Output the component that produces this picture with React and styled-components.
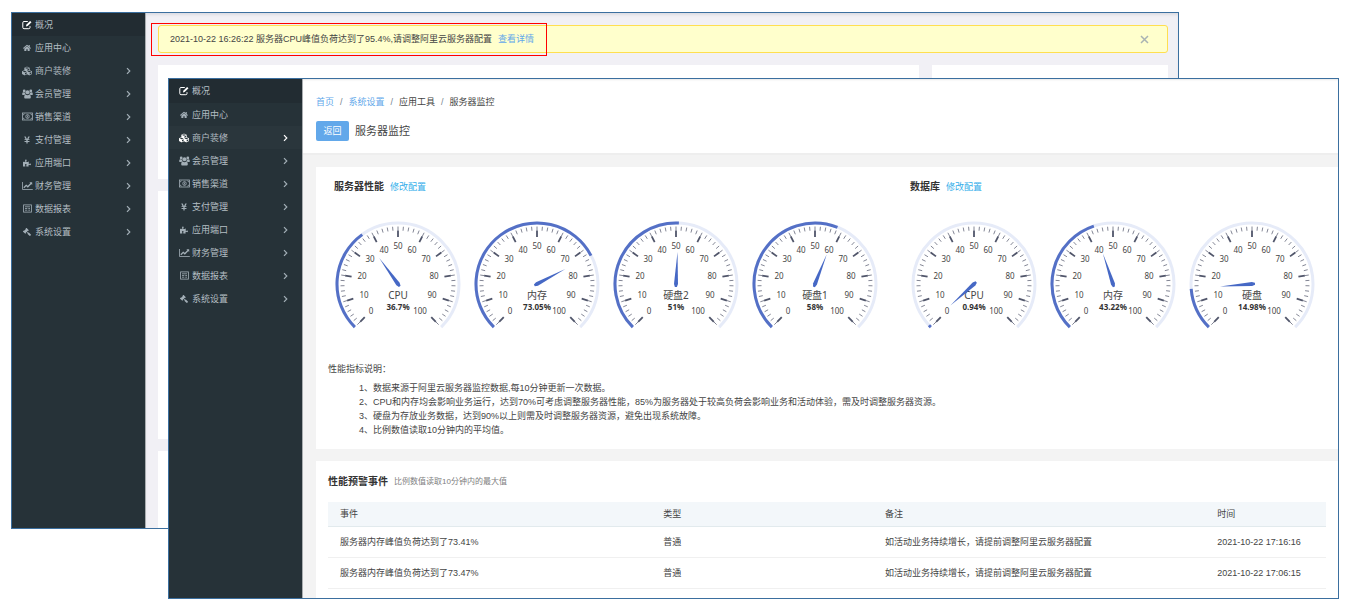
import React from "react";
import styled, { createGlobalStyle } from "styled-components";
import {
  FaHome,
  FaCubes,
  FaYenSign,
  FaPuzzlePiece,
  FaGavel,
} from "react-icons/fa";

const GlobalStyle = createGlobalStyle`
  * {
    box-sizing: border-box;
  }
  body {
    margin: 0;
    background: #ffffff;
    color: #444444;
    font-family: "Liberation Sans", "Noto Sans CJK SC", sans-serif;
    font-size: 9px;
    line-height: 14px;
  }
  a {
    text-decoration: none;
  }
`;

const Desktop = styled.div`
  position: relative;
  min-height: 100vh;
  overflow: hidden;
`;

const Window = styled.section`
  position: absolute;
  display: flex;
  overflow: hidden;
  border: 1px solid #3b6f9f;
`;
const BackWindow = styled(Window)`
  top: 12px;
  bottom: 83px;
  left: 11px;
  right: 174px;
  background: #f1f0f5;
`;
const FrontWindow = styled(Window)`
  top: 78px;
  bottom: 13px;
  left: 168px;
  right: 14px;
  background: #f3f3f3;
`;

/* sidebar */
const Side = styled.nav`
  flex: none;
  width: 134px;
  border-right: 1px solid #a9adb0;
  background: #263238;
`;
const Menu = styled.ul`
  margin: 0;
  padding: 0;
  list-style: none;
`;
const MenuLink = styled.a`
  display: flex;
  align-items: center;
  gap: 2px;
  height: ${({ $tall }) => ($tall ? "24px" : "23px")};
  padding: 0 13px 0 9px;
  background: ${({ $active, $hover }) =>
    $active ? "#222c32" : $hover ? "#2a363c" : "transparent"};
  color: ${({ $active, $hover }) => ($active || $hover ? "#ffffff" : "#a3afb7")};
`;
const MenuIcon = styled.span`
  display: flex;
  justify-content: center;
  width: 12px;
  font-size: ${({ $small }) => ($small ? "8px" : "10px")};
`;
const MenuText = styled.span`
  flex: 1;
  color: #b4bec3;
`;

const EditIcon = () => (
  <svg width="10" height="10" viewBox="0 0 10 10" fill="none" stroke="currentColor">
    <path d="M5.8 1.5H2a1.2 1.2 0 0 0-1.2 1.2v4.8A1.2 1.2 0 0 0 2 8.7h4.8A1.2 1.2 0 0 0 8 7.5V6.2" />
    <path d="M4 6.5l.3-1.8L8.1.9l1.4 1.4-3.8 3.8z" fill="currentColor" stroke="none" />
  </svg>
);
const GroupIcon = () => (
  <svg width="11" height="10" viewBox="0 0 11 10" fill="currentColor">
    <circle cx="2.2" cy="1.9" r="1.4" />
    <circle cx="8.8" cy="1.9" r="1.4" />
    <circle cx="5.5" cy="3.3" r="2" />
    <path d="M.2 5.2c0-1.4.5-2 1.2-2 .5.4 1 .5 1.7.4 0 .8.2 1.3.6 1.8-.7 0-1.2.2-1.6.7H1C.5 6.100.2 5.800.2 5.200z" />
    <path d="M10.800 5.200c0-1.400-.5-2-1.200-2-.5.400-1 .5-1.700.400 0 .8-.2 1.300-.6 1.800.7 0 1.200.2 1.600.7H10c.5 0 .8-.3.8-.9z" />
    <path d="M2.200 8.200c0-1.600.6-2.600 1.700-2.600 1 .7 2.200.7 3.200 0 1.100 0 1.700 1 1.700 2.600 0 .8-.5 1.300-1.200 1.300H3.400c-.7 0-1.200-.5-1.200-1.300z" />
  </svg>
);
const MoneyIcon = () => (
  <svg width="11" height="9" viewBox="0 0 11 9" fill="none" stroke="currentColor" strokeWidth="0.8">
    <rect x="0.500" y="1" width="10" height="7" />
    <ellipse cx="5.500" cy="4.500" rx="1.700" ry="2" />
    <path d="M5.500 3.400v2.200M1 2.900c.8 0 1.300-.5 1.300-1.300M10 2.900c-.8 0-1.300-.5-1.300-1.300M1 6.100c.8 0 1.300.5 1.300 1.300M10 6.100c-.8 0-1.300.5-1.300 1.300" />
  </svg>
);
const ChartIcon = () => (
  <svg width="11" height="10" viewBox="0 0 11 10" fill="none" stroke="currentColor">
    <path d="M.5 1v7.500H10.800" strokeWidth="0.800" />
    <path d="M1.800 6.800l2.400-2.500 1.600 1.500 3.400-3.500" strokeWidth="1.300" />
    <path d="M7.400 1.300h2.800v2.800z" fill="currentColor" stroke="none" />
  </svg>
);
const ReportIcon = () => (
  <svg width="9" height="9" viewBox="0 0 9 9" fill="none" stroke="currentColor" strokeWidth="0.8">
    <rect x="0.600" y="0.900" width="7.800" height="7.200" />
    <path d="M2 2.800h5M2 4.500h2.300M5.300 4.500h1.700M2 6.200h2.300M5.300 6.200h1.700" />
  </svg>
);
const GavelIcon = styled(FaGavel)`
  transform: scaleX(-1);
`;
const Chevron = () => (
  <svg width="7" height="8" viewBox="0 0 7 8" fill="none" stroke="currentColor" strokeWidth="1.2">
    <path d="M2 1.200L4.800 4L2 6.800" />
  </svg>
);

const menu = [
  { text: "概况", icon: EditIcon },
  { text: "应用中心", icon: FaHome, small: true },
  { text: "商户装修", icon: FaCubes, sub: true },
  { text: "会员管理", icon: GroupIcon, sub: true },
  { text: "销售渠道", icon: MoneyIcon, sub: true },
  { text: "支付管理", icon: FaYenSign, small: true, sub: true },
  { text: "应用端口", icon: FaPuzzlePiece, small: true, sub: true },
  { text: "财务管理", icon: ChartIcon, sub: true },
  { text: "数据报表", icon: ReportIcon, sub: true },
  { text: "系统设置", icon: GavelIcon, small: true, sub: true },
];

const Sidebar = ({ hovered, tallFirst }) => (
  <Side>
    <Menu>
      {menu.map(({ text, icon: Icon, small, sub }, index) => (
        <li key={text}>
          <MenuLink
            href="#"
            $active={index === 0}
            $hover={index === hovered}
            $tall={tallFirst && index === 0}
          >
            <MenuIcon $small={small}>
              <Icon />
            </MenuIcon>
            <MenuText>{text}</MenuText>
            {sub && <Chevron />}
          </MenuLink>
        </li>
      ))}
    </Menu>
  </Side>
);

/* overview page */
const Overview = styled.main`
  flex: 1;
  display: flex;
  flex-direction: column;
  gap: 12px;
  padding: 12px 10px 0 12px;
  box-shadow: inset 0 3px 3px -1px #dcdce2;
`;
const Alert = styled.div`
  position: relative;
  display: flex;
  align-items: center;
  gap: 6px;
  height: 28px;
  padding: 0 18px 0 11px;
  border: 1px solid #ffdf50;
  border-radius: 3px;
  background: #ffffcc;
`;
const AlertMark = styled.div`
  position: absolute;
  top: -3px;
  left: -8px;
  width: 396px;
  height: 33px;
  border: 1px solid #ff0000;
`;
const Link = styled.a`
  color: ${({ $bright }) => ($bright ? "#34aeea" : "#62a8ea")};
`;
const Close = styled.button`
  display: flex;
  margin-left: auto;
  padding: 0;
  border: 0;
  background: none;
  color: #a9b3b3;
`;
const Tiles = styled.div`
  flex: 1;
  display: grid;
  grid-template-columns: 1fr 236px;
  grid-template-rows: 114px 248px 1fr;
  gap: 12px 13px;
`;
const Tile = styled.div`
  background: #ffffff;
`;

/* monitor page */
const Monitor = styled.main`
  flex: 1;
  min-width: 0;
`;
const PageHeader = styled.header`
  padding: 16px 13px 12px;
  border-bottom: 2px solid #eeeeee;
  background: #ffffff;
  box-shadow: inset 0 2px 2px -1px #e8e8e8;
`;
const Crumbs = styled.nav`
  display: flex;
  gap: 6px;
`;
const Slash = styled.span`
  color: #76838f;
`;
const TitleRow = styled.div`
  display: flex;
  align-items: center;
  gap: 6px;
  margin-top: 12px;
`;
const BackButton = styled.button`
  width: 33px;
  height: 20px;
  padding: 0;
  border: 0;
  border-radius: 2px;
  background: #62a8ea;
  color: #ffffff;
  font: inherit;
`;
const PageTitle = styled.h1`
  margin: 0;
  font-size: 11px;
  font-weight: 400;
`;
const Card = styled.section`
  margin: 12px 0 0 13px;
  padding: ${({ $pad }) => $pad};
  background: #ffffff;
`;
const Groups = styled.div`
  display: flex;
  gap: 20px;
`;
const Head = styled.div`
  display: flex;
  align-items: center;
  gap: 6px;
  padding: ${({ $indent }) => ($indent ? "0 6px" : "0")};
`;
const HeadTitle = styled.h2`
  margin: 0;
  color: #333333;
  font-size: 10px;
  font-weight: 700;
`;
const HeadNote = styled.span`
  color: #808080;
  font-size: 8px;
`;
const Gauges = styled.div`
  display: flex;
  margin-top: 20px;
`;
const Dial = styled.svg`
  display: block;
  width: 139px;
  height: 140px;
  font-family: "Noto Sans", "Noto Sans CJK SC", sans-serif;
  text-anchor: middle;
`;
const Notes = styled.div`
  margin-top: 8px;
`;
const NoteList = styled.ul`
  margin: 5px 0 0;
  padding: 0 0 0 31px;
  list-style: none;
`;

const Table = styled.table`
  width: 100%;
  margin-top: 13px;
  border-collapse: collapse;
  table-layout: fixed;
`;
const Th = styled.th`
  width: ${({ $width }) => $width};
  height: 24px;
  padding: 0 12px;
  border-bottom: 1px solid #e2eaed;
  background: #f3f7fa;
  font-weight: 400;
  text-align: left;
`;
const Td = styled.td`
  height: 31px;
  padding: 0 12px;
  border-bottom: 1px solid #f0f0f0;
  white-space: nowrap;
`;

const CX = 70;
const CY = 70;

// 0 sits at the lower left, 100 at the lower right, 270 degrees apart
const point = (value, radius) => {
  const angle = ((225 - value * 2.7) * Math.PI) / 180;
  return [CX + radius * Math.cos(angle), CY - radius * Math.sin(angle)];
};

const arc = (value) => {
  const large = value * 2.7 > 180 ? 1 : 0;
  return `M${point(0, 61)} A61 61 0 ${large} 1 ${point(value, 61)}`;
};

const labels = [
  [-27, 27],
  [-34, 11],
  [-36, -8],
  [-28, -25],
  [-14, -34],
  [0, -38],
  [14, -34],
  [28, -25],
  [36, -8],
  [34, 11],
  [22, 27],
];

const Gauge = ({ name, value }) => (
  <Dial viewBox="0 0 139 140" role="img" aria-label={`${name} ${value}%`}>
    <path d={arc(100)} fill="none" stroke="#e6ebf8" strokeWidth="3" />
    <path d={arc(value)} fill="none" stroke="#5470c6" strokeWidth="3" />
    {Array.from({ length: 51 }, (_, i) => {
      const [x1, y1] = point(i * 2, 57.5);
      const [x2, y2] = point(i * 2, 53.5);
      return (
        <line key={i} x1={x1} y1={y1} x2={x2} y2={y2} stroke="#63677a" strokeWidth="0.8" />
      );
    })}
    {labels.map(([dx, dy], i) => {
      const [x1, y1] = point(i * 10, 53.5);
      const [x2, y2] = point(i * 10, 47);
      return (
        <g key={i}>
          <line x1={x1} y1={y1} x2={x2} y2={y2} stroke="#50556a" strokeWidth="1.8" />
          <text x={CX + dx} y={CY + dy + 3} fontSize="8" fill="#464646">
            {i * 10}
          </text>
        </g>
      );
    })}
    <text x={CX} y={CY + 15} fontSize="10" fill="#464646">
      {name}
    </text>
    <text x={CX} y={CY + 26} fontSize="8" fontWeight="700" fill="#333333">
      {value}%
    </text>
    <path
      d={`M${CX} ${CY - 32} L${CX + 2} ${CY} L${CX + 1} ${CY + 3} H${CX - 1} L${CX - 2} ${CY} Z`}
      fill="#4668c5"
      transform={`rotate(${value * 2.7 - 135} ${CX} ${CY})`}
    />
  </Dial>
);

const groups = [
  {
    title: "服务器性能",
    gauges: [
      { name: "CPU", value: 36.7 },
      { name: "内存", value: 73.05 },
      { name: "硬盘2", value: 51 },
      { name: "硬盘1", value: 58 },
    ],
  },
  {
    title: "数据库",
    gauges: [
      { name: "CPU", value: 0.94 },
      { name: "内存", value: 43.22 },
      { name: "硬盘", value: 14.98 },
    ],
  },
];

const notes = [
  "1、数据来源于阿里云服务器监控数据,每10分钟更新一次数据。",
  "2、CPU和内存均会影响业务运行，达到70%可考虑调整服务器性能，85%为服务器处于较高负荷会影响业务和活动体验，需及时调整服务器资源。",
  "3、硬盘为存放业务数据，达到90%以上则需及时调整服务器资源，避免出现系统故障。",
  "4、比例数值读取10分钟内的平均值。",
];

const events = [
  {
    event: "服务器内存峰值负荷达到了73.41%",
    type: "普通",
    remark: "如活动业务持续增长，请提前调整阿里云服务器配置",
    time: "2021-10-22 17:16:16",
  },
  {
    event: "服务器内存峰值负荷达到了73.47%",
    type: "普通",
    remark: "如活动业务持续增长，请提前调整阿里云服务器配置",
    time: "2021-10-22 17:06:15",
  },
];

const App = () => {
  return (
    <Desktop>
      <GlobalStyle />
      <BackWindow>
        <Sidebar />
        <Overview>
          <Alert role="alert">
            <AlertMark />
            <span>
              2021-10-22 16:26:22 服务器CPU峰值负荷达到了95.4%,请调整阿里云服务器配置
            </span>
            <Link href="#">查看详情</Link>
            <Close aria-label="关闭">
              <svg width="9" height="9" viewBox="0 0 9 9" stroke="currentColor" strokeWidth="1.5">
                <path d="M1 1 L8 8 M8 1 L1 8" />
              </svg>
            </Close>
          </Alert>
          <Tiles>
            <Tile />
            <Tile />
            <Tile />
            <Tile />
            <Tile />
            <Tile />
          </Tiles>
        </Overview>
      </BackWindow>

      <FrontWindow>
        <Sidebar hovered={2} tallFirst />
        <Monitor>
          <PageHeader>
            <Crumbs>
              <Link href="#">首页</Link>
              <Slash>/</Slash>
              <Link href="#">系统设置</Link>
              <Slash>/</Slash>
              <span>应用工具</span>
              <Slash>/</Slash>
              <span>服务器监控</span>
            </Crumbs>
            <TitleRow>
              <BackButton>返回</BackButton>
              <PageTitle>服务器监控</PageTitle>
            </TitleRow>
          </PageHeader>
          <Card $pad="13px 12px 12px">
            <Groups>
              {groups.map((group) => (
                <div key={group.title}>
                  <Head $indent>
                    <HeadTitle>{group.title}</HeadTitle>
                    <Link href="#" $bright>
                      修改配置
                    </Link>
                  </Head>
                  <Gauges>
                    {group.gauges.map((gauge) => (
                      <Gauge key={gauge.name} {...gauge} />
                    ))}
                  </Gauges>
                </div>
              ))}
            </Groups>
            <Notes>
              性能指标说明：
              <NoteList>
                {notes.map((note) => (
                  <li key={note}>{note}</li>
                ))}
              </NoteList>
            </Notes>
          </Card>
          <Card $pad="14px 12px 24px">
            <Head>
              <HeadTitle>性能预警事件</HeadTitle>
              <HeadNote>比例数值读取10分钟内的最大值</HeadNote>
            </Head>
            <Table>
              <thead>
                <tr>
                  <Th $width="32.4%">事件</Th>
                  <Th $width="22.2%">类型</Th>
                  <Th $width="33.3%">备注</Th>
                  <Th>时间</Th>
                </tr>
              </thead>
              <tbody>
                {events.map((row) => (
                  <tr key={row.time}>
                    <Td>{row.event}</Td>
                    <Td>{row.type}</Td>
                    <Td>{row.remark}</Td>
                    <Td>{row.time}</Td>
                  </tr>
                ))}
              </tbody>
            </Table>
          </Card>
        </Monitor>
      </FrontWindow>
    </Desktop>
  );
};

export default App;
